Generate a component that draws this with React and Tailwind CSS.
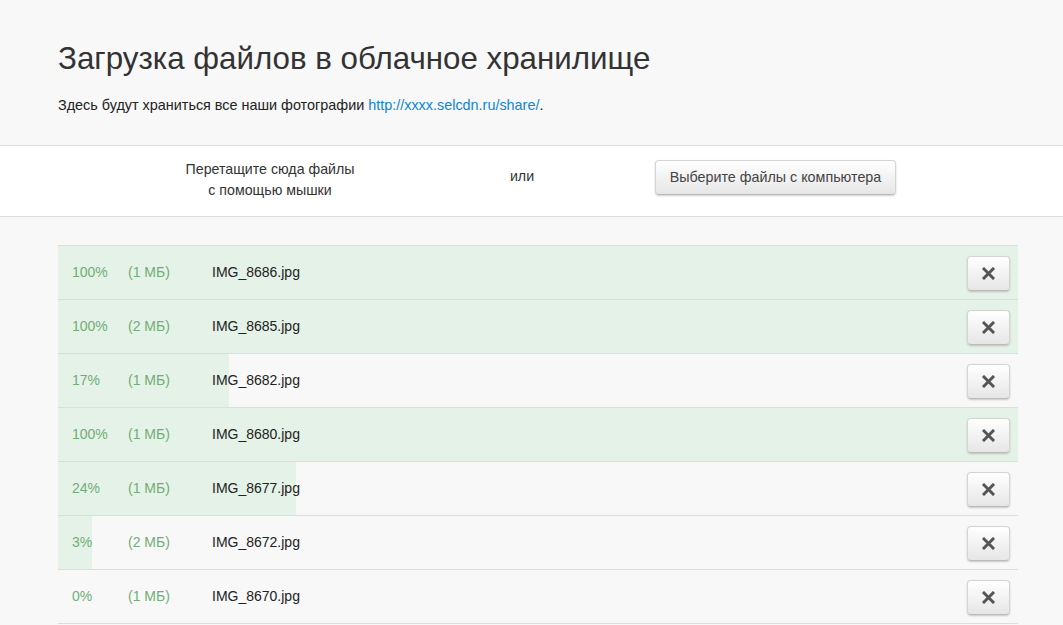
import React from "react";

const files = [
  { pct: 100, size: "1 МБ", name: "IMG_8686.jpg", w: 960 },
  { pct: 100, size: "2 МБ", name: "IMG_8685.jpg", w: 960 },
  { pct: 17, size: "1 МБ", name: "IMG_8682.jpg", w: 171 },
  { pct: 100, size: "1 МБ", name: "IMG_8680.jpg", w: 960 },
  { pct: 24, size: "1 МБ", name: "IMG_8677.jpg", w: 238 },
  { pct: 3, size: "2 МБ", name: "IMG_8672.jpg", w: 34 },
  { pct: 0, size: "1 МБ", name: "IMG_8670.jpg", w: 0 },
];

function XIcon() {
  return (
    <svg width="13" height="13" viewBox="0 0 13 13">
      <path d="M2 2 L11 11 M11 2 L2 11" stroke="#555" strokeWidth="3" strokeLinecap="square" />
    </svg>
  );
}

export default function App() {
  return (
    <div
      className="min-h-screen bg-[#f8f8f8] text-[#333]"
      style={{ fontFamily: '"Liberation Sans", Arial, sans-serif' }}
    >
      <div className="h-[145px] px-[58px] pt-[41px]">
        <h1 className="text-[31.3px] leading-[36px] text-[#333]">Загрузка файлов в облачное хранилище</h1>
        <p className="mt-[19px] text-[14.4px] leading-[18px] text-[#222]">
          Здесь будут храниться все наши фотографии{" "}
          <a href="#" className="text-[#0a87d8]">http://xxxx.selcdn.ru/share/</a>.
        </p>
      </div>
      <div className="flex h-[72px] items-start border-y border-[#ddd] bg-white text-[14.2px] text-[#333]">
        <div className="ml-[120px] mt-[13px] w-[300px] text-center leading-[21px]">
          Перетащите сюда файлы
          <br />
          с помощью мышки
        </div>
        <div className="mt-[20px] w-[204px] text-center leading-[21px]">или</div>
        <button className="ml-[31px] mt-[14px] h-[35px] w-[241px] rounded-[4px] border border-[#d4d4d4] border-b-[#bbb] bg-gradient-to-b from-white to-[#e6e6e6] text-[14.3px] text-[#444] shadow-[0_1px_2px_rgba(0,0,0,0.2)]">
          Выберите файлы с компьютера
        </button>
      </div>
      <div className="ml-[58px] mt-[28px] w-[960px] border-t border-[#ddd]">
        {files.map((f) => (
          <div
            key={f.name}
            className="flex h-[54px] items-center border-b border-[#ddd] text-[14px]"
            style={{
              background: `linear-gradient(to right, #e5f2e7 ${f.w}px, transparent ${f.w}px)`,
            }}
          >
            <div className="w-[70px] pl-[14px] text-[#72ad78]">{f.pct}%</div>
            <div className="w-[84px] text-[#72ad78]">({f.size})</div>
            <div className="flex-1 text-[#222]">{f.name}</div>
            <button className="mr-[8px] mt-[1px] flex h-[35px] w-[43px] items-center justify-center rounded-[4px] border border-[#d4d4d4] border-b-[#bbb] bg-gradient-to-b from-white to-[#e6e6e6] shadow-[0_1px_2px_rgba(0,0,0,0.2)]">
              <XIcon />
            </button>
          </div>
        ))}
      </div>
    </div>
  );
}
